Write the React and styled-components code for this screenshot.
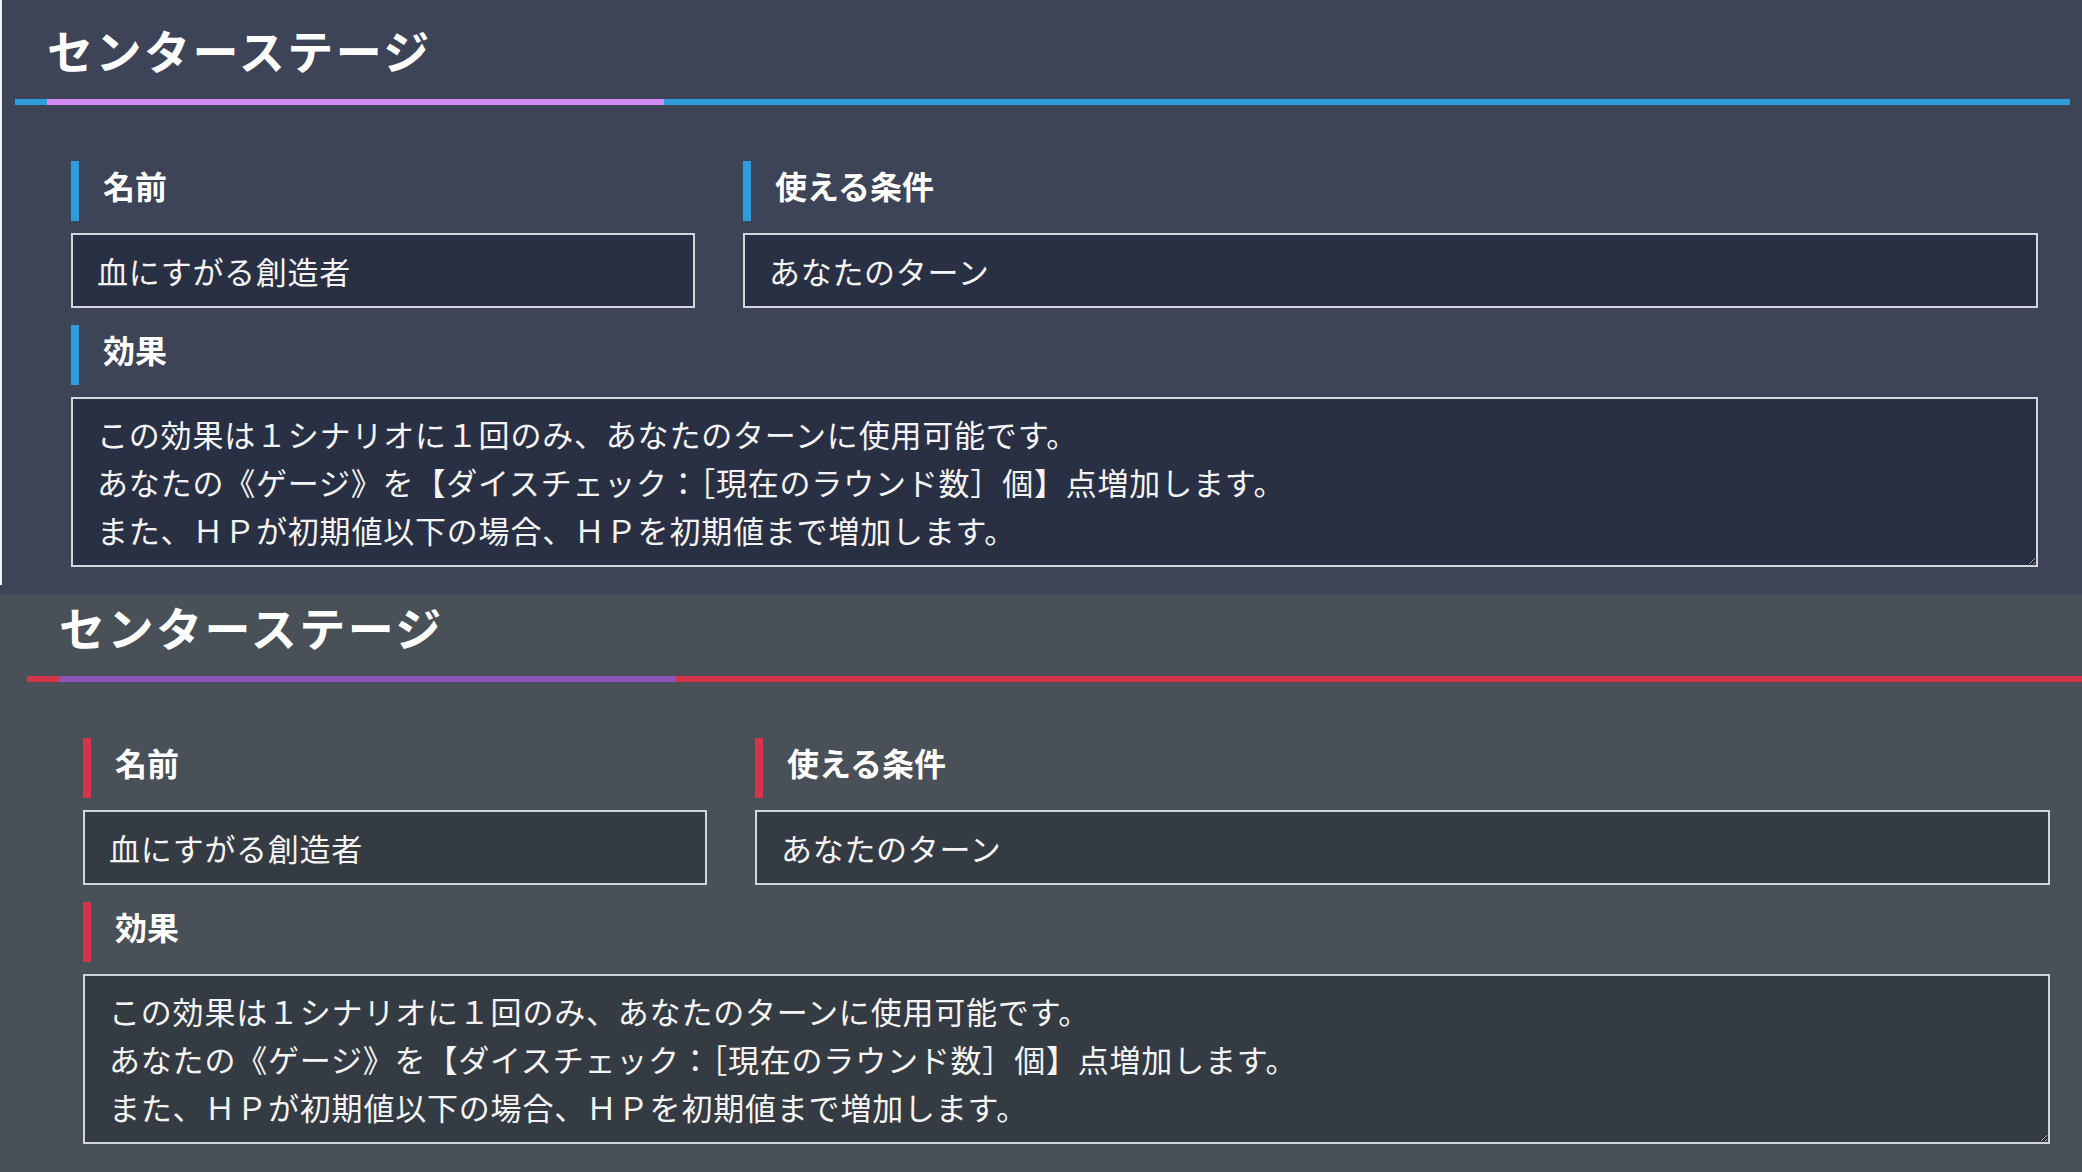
import React from 'react'
import styled, { createGlobalStyle } from 'styled-components'

const GlobalStyle = createGlobalStyle`
  html, body {
    margin: 0;
    padding: 0;
    background: #495058;
    overflow: hidden;
  }
  body {
    font-family: "Noto Sans CJK JP", "Noto Sans", sans-serif;
  }
`

const themes = {
  blue: {
    bg: '#3e4457',
    field: '#2a3044',
    accent: '#2f9cdc',
    highlight: '#d68cf5',
  },
  red: {
    bg: '#495058',
    field: '#353b43',
    accent: '#d6344a',
    highlight: '#8c55b9',
  },
}

const Panel = styled.section`
  background: ${p => p.$theme.bg};
  padding-bottom: ${p => p.$tail}px;
  overflow: hidden;
`

const Body = styled.div`
  margin-left: ${p => p.$shift}px;
  margin-right: -${p => p.$shift}px;
  border-left: 2px solid ${p => (p.$edge ? '#f3f3f3' : 'transparent')};
  padding-bottom: ${p => p.$bottom}px;
`

const Header = styled.header`
  padding-top: ${p => p.$top}px;
`

const Title = styled.h2`
  margin: 0 0 22px 0;
  padding-left: 45px;
  font-size: 46px;
  line-height: 1.2;
  font-weight: 700;
  letter-spacing: 2.5px;
  color: #ffffff;
`

const Rule = styled.div`
  height: 6px;
  margin: 0 12px 0 13px;
  background: ${p => p.$theme.accent};

  &::before {
    content: '';
    display: block;
    height: 100%;
    width: 617px;
    margin-left: 32px;
    background: ${p => p.$theme.highlight};
  }
`

const Form = styled.div`
  display: grid;
  grid-template-columns: 624px 1fr;
  column-gap: 48px;
  row-gap: 17px;
  padding: 56px 44px 0 69px;
`

const Field = styled.div`
  display: flex;
  flex-direction: column;
  gap: 12px;
  grid-column: ${p => (p.$wide ? '1 / span 2' : 'auto')};
`

const Label = styled.label`
  display: block;
  height: 60px;
  box-sizing: border-box;
  border-left: 8px solid ${p => p.$theme.accent};
  padding: 2px 0 14px 24px;
  font-size: 32px;
  line-height: 44px;
  font-weight: 700;
  color: #ffffff;
`

const Input = styled.input`
  box-sizing: border-box;
  width: 100%;
  height: 75px;
  margin: 0;
  padding: 0 24px;
  border: 2px solid #d2d5da;
  border-radius: 0;
  background: ${p => p.$theme.field};
  color: #f4f4f4;
  font-family: inherit;
  font-size: 31px;
  letter-spacing: 0.7px;
  outline: none;
`

const TextArea = styled.textarea`
  box-sizing: border-box;
  display: block;
  width: 100%;
  height: 170px;
  margin: 0;
  padding: 11px 24px 9px;
  border: 2px solid #d2d5da;
  border-radius: 0;
  background: ${p => p.$theme.field};
  color: #f4f4f4;
  font-family: inherit;
  font-size: 31px;
  line-height: 48px;
  letter-spacing: 0.8px;
  overflow: hidden;
  outline: none;
`

const effectText =
  'この効果は１シナリオに１回のみ、あなたのターンに使用可能です。\n' +
  'あなたの《ゲージ》を【ダイスチェック：［現在のラウンド数］個】点増加します。\n' +
  'また、ＨＰが初期値以下の場合、ＨＰを初期値まで増加します。'

function SkillCard({ theme, shift, edge, top, bottom, tail }) {
  return (
    <Panel $theme={theme} $tail={tail}>
      <Body $shift={shift} $edge={edge} $bottom={bottom}>
        <Header $top={top}>
          <Title>センターステージ</Title>
          <Rule $theme={theme} />
        </Header>
        <Form>
          <Field>
            <Label $theme={theme}>名前</Label>
            <Input $theme={theme} readOnly defaultValue="血にすがる創造者" />
          </Field>
          <Field>
            <Label $theme={theme}>使える条件</Label>
            <Input $theme={theme} readOnly defaultValue="あなたのターン" />
          </Field>
          <Field $wide>
            <Label $theme={theme}>効果</Label>
            <TextArea $theme={theme} readOnly defaultValue={effectText} />
          </Field>
        </Form>
      </Body>
    </Panel>
  )
}

export default function App() {
  return (
    <>
      <GlobalStyle />
      <SkillCard theme={themes.blue} shift={0} edge top={22} bottom={18} tail={10} />
      <SkillCard theme={themes.red} shift={12} top={4} bottom={26} tail={0} />
    </>
  )
}
